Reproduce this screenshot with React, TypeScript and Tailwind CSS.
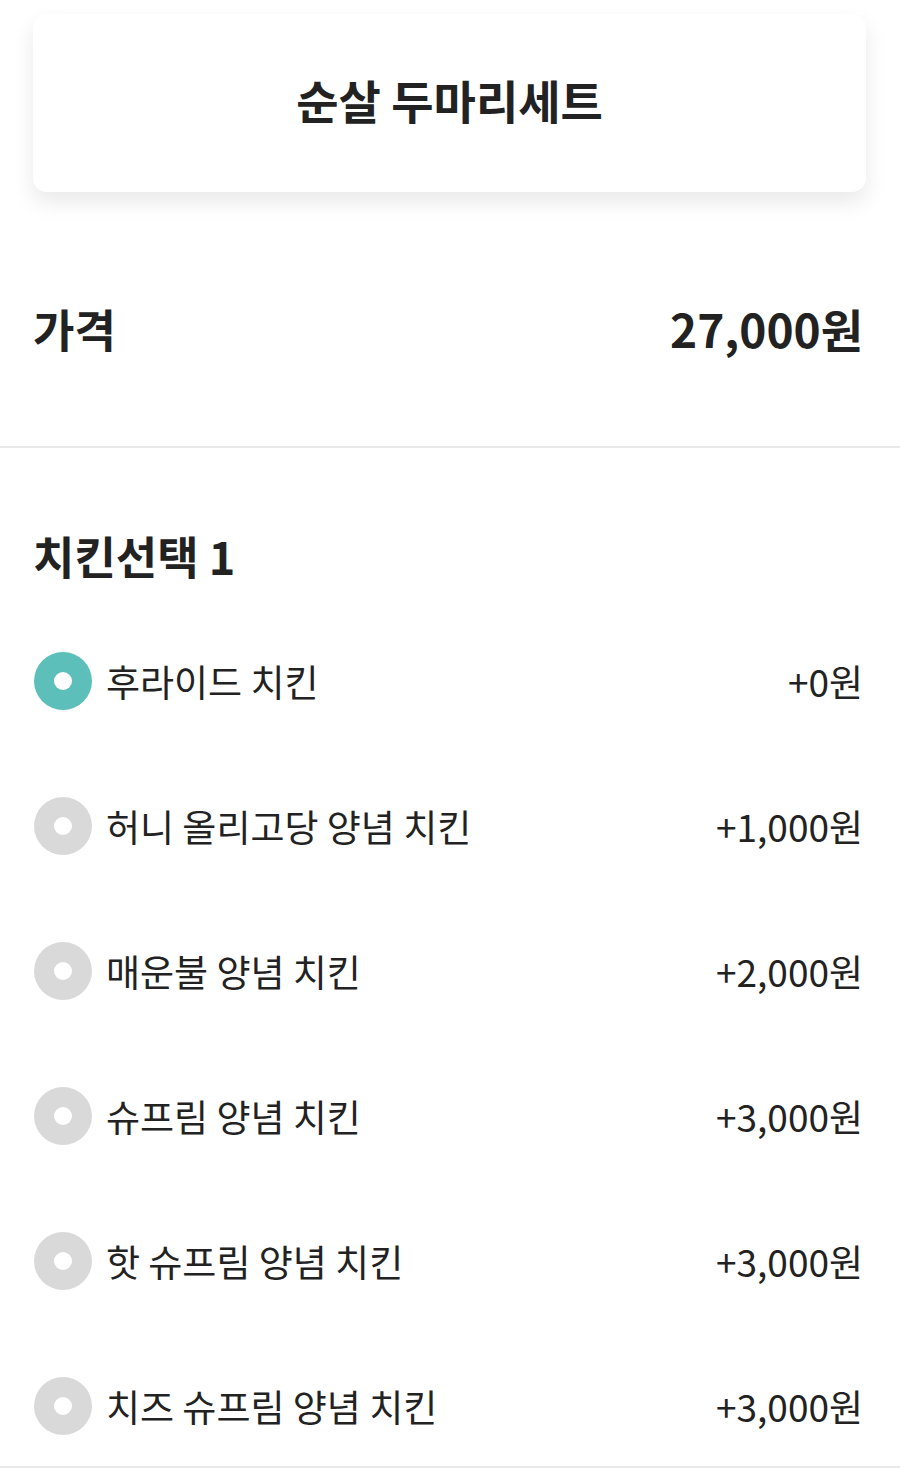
import React from "react";

const options = [
  { name: "후라이드 치킨", price: "+0원", selected: true },
  { name: "허니 올리고당 양념 치킨", price: "+1,000원" },
  { name: "매운불 양념 치킨", price: "+2,000원" },
  { name: "슈프림 양념 치킨", price: "+3,000원" },
  { name: "핫 슈프림 양념 치킨", price: "+3,000원" },
  { name: "치즈 슈프림 양념 치킨", price: "+3,000원" },
];

export default function App() {
  return (
    <div
      className="w-[900px] min-h-[1474px] bg-white text-[#222222]"
      style={{ fontFamily: '"Noto Sans CJK KR", "Noto Sans", sans-serif' }}
    >
      <div className="pl-[33px] pr-[37px] pt-[14px]">
        <div className="mr-[-3px] h-[178px] pb-[8px] rounded-[14px] bg-white shadow-[0_10px_22px_rgba(0,0,0,0.09)] flex items-center justify-center">
          <h1 className="text-[46px] font-bold leading-none">순살 두마리세트</h1>
        </div>
        <div className="mt-[108px] mb-[90px] h-[56px] flex items-center justify-between">
          <span className="text-[45px] font-bold leading-none">가격</span>
          <span className="text-[46px] font-bold leading-none">27,000원</span>
        </div>
      </div>
      <div className="h-[2px] bg-[#e9e9e9]" />
      <div className="pl-[33px] pr-[37px]">
        <div className="mt-[79px] h-[56px] flex items-center">
          <h2 className="text-[45px] font-bold leading-none">치킨선택 1</h2>
        </div>
        <div className="mt-[68px] flex flex-col gap-[85px]">
          {options.map((o) => (
            <div key={o.name} className="h-[60px] flex items-center justify-between">
              <div className="flex items-center gap-[14px]">
                <div
                  className={
                    o.selected
                      ? "ml-[1px] w-[58px] h-[58px] rounded-full bg-[#5cbfb9] flex items-center justify-center"
                      : "ml-[1px] w-[58px] h-[58px] rounded-full bg-[#d9d9d9] flex items-center justify-center"
                  }
                >
                  <div className="w-[18px] h-[18px] rounded-full bg-white" />
                </div>
                <span className="text-[37px] leading-none">{o.name}</span>
              </div>
              <span className="text-[37px] leading-none">{o.price}</span>
            </div>
          ))}
        </div>
      </div>
      <div className="mt-[30px] h-[2px] bg-[#e9e9e9]" />
    </div>
  );
}
